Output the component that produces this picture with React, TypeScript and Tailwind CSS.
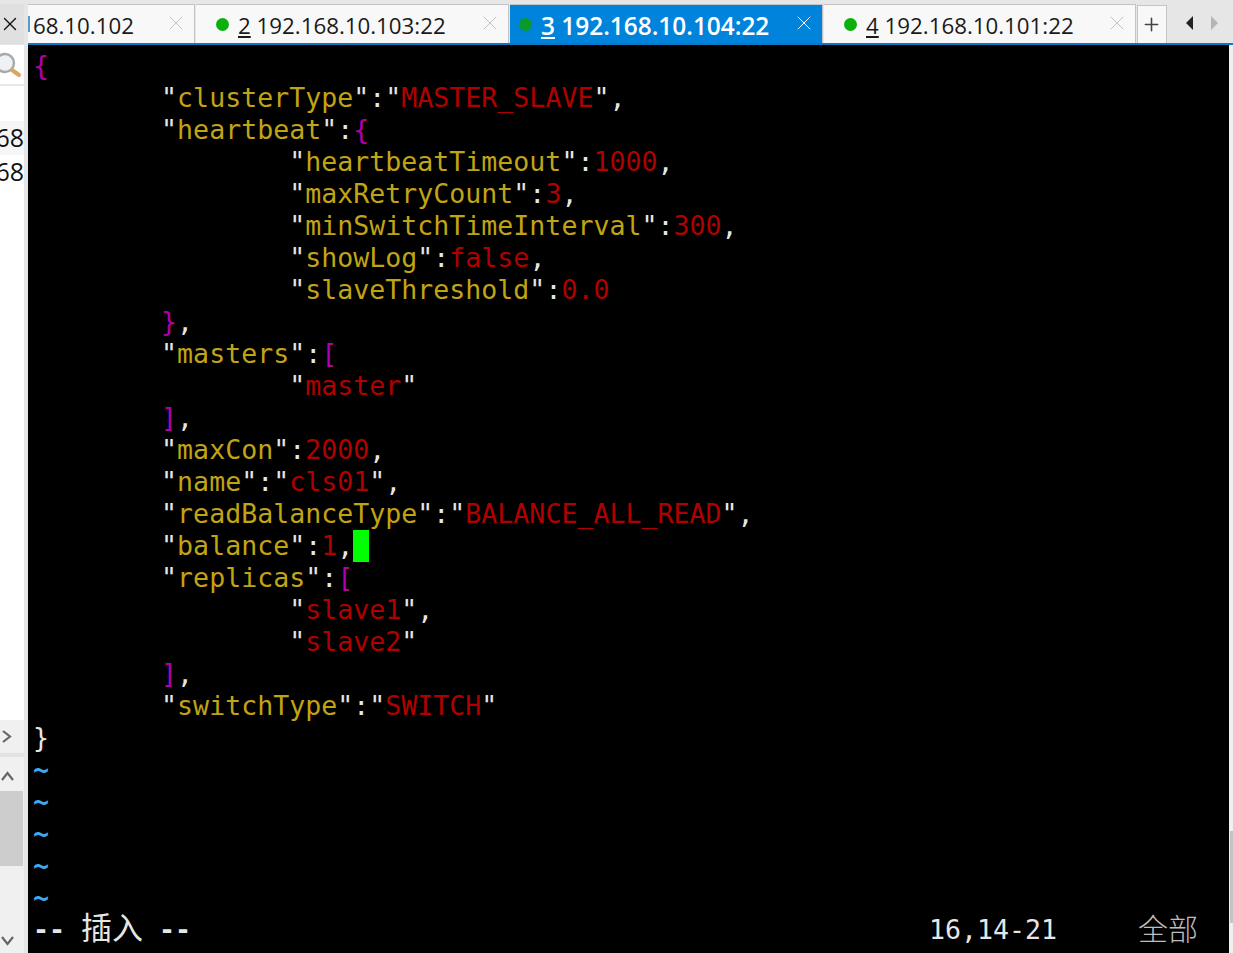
import React from "react";
import { X, Plus } from "lucide-react";

const K = "text-[#c0a414]";
const S = "text-[#b00000]";
const P = "text-[#b000b0]";
const W = "text-[#e6e6e6]";

type Seg = [string, string];

// helpers for the vim json colouring
const key = (name: string): Seg[] => [
  [W, '"'],
  [K, name],
  [W, '"'],
  [W, ":"],
];
const str = (v: string): Seg[] => [
  [W, '"'],
  [S, v],
  [W, '"'],
];

const lines: Seg[][] = [
  [[P, "{"]],
  [[W, "        "], ...key("clusterType"), ...str("MASTER_SLAVE"), [W, ","]],
  [[W, "        "], ...key("heartbeat"), [P, "{"]],
  [[W, "                "], ...key("heartbeatTimeout"), [S, "1000"], [W, ","]],
  [[W, "                "], ...key("maxRetryCount"), [S, "3"], [W, ","]],
  [[W, "                "], ...key("minSwitchTimeInterval"), [S, "300"], [W, ","]],
  [[W, "                "], ...key("showLog"), [S, "false"], [W, ","]],
  [[W, "                "], ...key("slaveThreshold"), [S, "0.0"]],
  [[W, "        "], [P, "}"], [W, ","]],
  [[W, "        "], ...key("masters"), [P, "["]],
  [[W, "                "], ...str("master")],
  [[W, "        "], [P, "]"], [W, ","]],
  [[W, "        "], ...key("maxCon"), [S, "2000"], [W, ","]],
  [[W, "        "], ...key("name"), ...str("cls01"), [W, ","]],
  [[W, "        "], ...key("readBalanceType"), ...str("BALANCE_ALL_READ"), [W, ","]],
  [[W, "        "], ...key("balance"), [S, "1"], [W, ","]],
  [[W, "        "], ...key("replicas"), [P, "["]],
  [[W, "                "], ...str("slave1"), [W, ","]],
  [[W, "                "], ...str("slave2")],
  [[W, "        "], [P, "]"], [W, ","]],
  [[W, "        "], ...key("switchType"), ...str("SWITCH")],
  [[W, "}"]],
];

const Tab = ({ num, label, active, width }: { num?: string; label: string; active?: boolean; width: string }) => (
  <div
    className={`${width} h-[39px] flex items-center shrink-0 border-t border-r border-[#c4c4c4] ${
      active ? "bg-[#0083db] border-[#0083db] text-white font-semibold" : "bg-[#f8f8f8] text-[#1a1a1a]"
    }`}
  >
    {num ? (
      <span className={`w-[13px] h-[13px] rounded-full ${active ? "ml-[9px] bg-[#0a9a2a]" : "ml-[20px] bg-[#0cb00c]"}`} />
    ) : (
      <span className="w-[2px] h-[16px] bg-[#5a9ac8]" />
    )}
    <span className={`flex-1 pt-[3px] leading-[36px] whitespace-nowrap ${active ? "text-[24.4px]" : "text-[22.3px]"} ${num ? "ml-[9px]" : "ml-[3px]"}`}>
      {num && <span className="underline underline-offset-2">{num}</span>}
      {num && " "}
      {label}
    </span>
    <X className={`mr-[6px] mb-[2px] ${active ? "text-white" : "text-[#c4c4c4]"}`} size={24} strokeWidth={1} />
  </div>
);

const App = () => {
  return (
    <div className="w-[1233px] h-[953px] overflow-hidden flex bg-[#e6e6e6] font-['Open_Sans','Liberation_Sans',sans-serif]">
      {/* left side panel */}
      <div className="w-[28px] shrink-0 flex flex-col pt-[4px] pr-[4px] bg-[#e6e6e6]">
        <div className="h-[40px] bg-[#e0e0e0] flex items-center justify-start">
          <X size={22} strokeWidth={1.5} className="text-[#111] -ml-[1px]" />
        </div>
        <div className="h-[41px] mt-[1px] bg-white border-b-[2px] border-[#e8e8e8] overflow-hidden shrink-0">
          <svg width="24" height="39" viewBox="0 0 24 39">
            <circle cx="5" cy="18" r="9" fill="#eef2f4" stroke="#a9a9a9" strokeWidth="2.4" />
            <path d="M12 25 L19 30" stroke="#d9a66a" strokeWidth="4" strokeLinecap="round" />
          </svg>
        </div>
        <div className="flex-1 bg-white flex flex-col overflow-hidden">
          <div className="mt-[35px] h-[34px] bg-[#f6f6f6] text-[25px] leading-[32px] text-[#111] flex justify-end">68</div>
          <div className="h-[34px] text-[25px] leading-[32px] text-[#111] flex justify-end">68</div>
        </div>
        <div className="h-[33px] bg-[#f0f0f0] flex items-center shrink-0">
          <svg width="24" height="33" viewBox="0 0 24 33">
            <path d="M3 11 L10 16.5 L3 22" fill="none" stroke="#666" strokeWidth="2.2" />
          </svg>
        </div>
        <div className="h-[4px] bg-[#e2e2e2] shrink-0" />
        <div className="h-[196px] bg-[#f0f0f0] flex flex-col shrink-0">
          <div className="h-[34px] flex items-center">
            <svg width="24" height="34" viewBox="0 0 24 34">
              <path d="M2 23 L7.5 16 L13 23" fill="none" stroke="#666" strokeWidth="2.2" />
            </svg>
          </div>
          <div className="h-[75px] bg-[#cdcdcd] w-[23px]" />
          <div className="flex-1" />
          <div className="h-[24px] flex items-center">
            <svg width="24" height="24" viewBox="0 0 24 24">
              <path d="M2 8 L7.5 15 L13 8" fill="none" stroke="#666" strokeWidth="2.2" />
            </svg>
          </div>
        </div>
      </div>

      {/* main */}
      <div className="flex-1 flex flex-col min-w-0">
        {/* tabs */}
        <div className="h-[43px] shrink-0 pt-[4px] bg-[#e6e6e6] flex items-start overflow-hidden">
          <div className="h-[39px] flex">
            <Tab label="68.10.102" width="w-[167px]" />
            <div className="w-[1px]" />
            <Tab num="2" label="192.168.10.103:22" width="w-[313px]" />
            <div className="w-[1px]" />
            <Tab num="3" label="192.168.10.104:22" width="w-[313px]" active />
            <div className="w-[1px]" />
            <Tab num="4" label="192.168.10.101:22" width="w-[312px]" />
            <div className="w-[1px]" />
            <div className="w-[30px] h-[38px] mt-[1px] bg-[#f8f8f8] border border-b-0 border-[#c4c4c4] flex items-center justify-center">
              <Plus size={21} strokeWidth={1.8} className="text-[#444] -ml-[1px] mb-[1px]" />
            </div>
            <div className="ml-[19px] flex items-center h-[37px]">
              <span className="w-0 h-0 border-y-[7px] border-y-transparent border-r-[7px] border-r-[#222]" />
              <span className="w-0 h-0 border-y-[7px] border-y-transparent border-l-[7px] border-l-[#b4b4b4] ml-[18px]" />
            </div>
          </div>
        </div>

        {/* terminal */}
        <div className="relative flex-1 bg-black border-t-[2px] border-[#0a78c2] pl-[5px] pt-[5px] font-['DejaVu_Sans_Mono',monospace] text-[26.6px] leading-[32px] whitespace-pre">
          {lines.map((segs, i) => (
            <div key={i} className="h-[32px]">
              {segs.map(([c, t], j) => (
                <span key={j} className={c}>
                  {t}
                </span>
              ))}
              {i === 15 && <span className="inline-block align-top w-[16px] h-[32px] bg-[#00ff00]" />}
            </div>
          ))}
          {[0, 1, 2, 3, 4].map((n) => (
            <div key={n} className="h-[32px] text-[#3fa9f0] font-bold">
              ~
            </div>
          ))}
          <div className="h-[32px] flex text-[#e6e6e6] font-['DejaVu_Sans_Mono','Noto_Sans_CJK_SC',monospace]">
            <span className="w-[895px]">
              <span className="font-bold">--</span>
              {" "}
              <span className="font-['Noto_Sans_CJK_SC',serif] text-[31px] leading-[0]">插入</span>
              {" "}
              <span className="font-bold">--</span>
            </span>
            <span className="ml-[1px]">16,14-21</span>
            <span className="ml-[81px] -mt-[3px] text-[#bdbdbd] font-['Noto_Sans_CJK_SC',sans-serif] font-light text-[30px]">全部</span>
          </div>
          {/* scrollbar sliver at right edge */}
          <div className="absolute right-0 top-0 bottom-0 w-[4px] bg-[#f0f0f0]" />
          <div className="absolute right-0 top-[786px] bottom-[30px] w-[3px] bg-[#c4c4c4]" />
        </div>
      </div>
    </div>
  );
};

export default App;
